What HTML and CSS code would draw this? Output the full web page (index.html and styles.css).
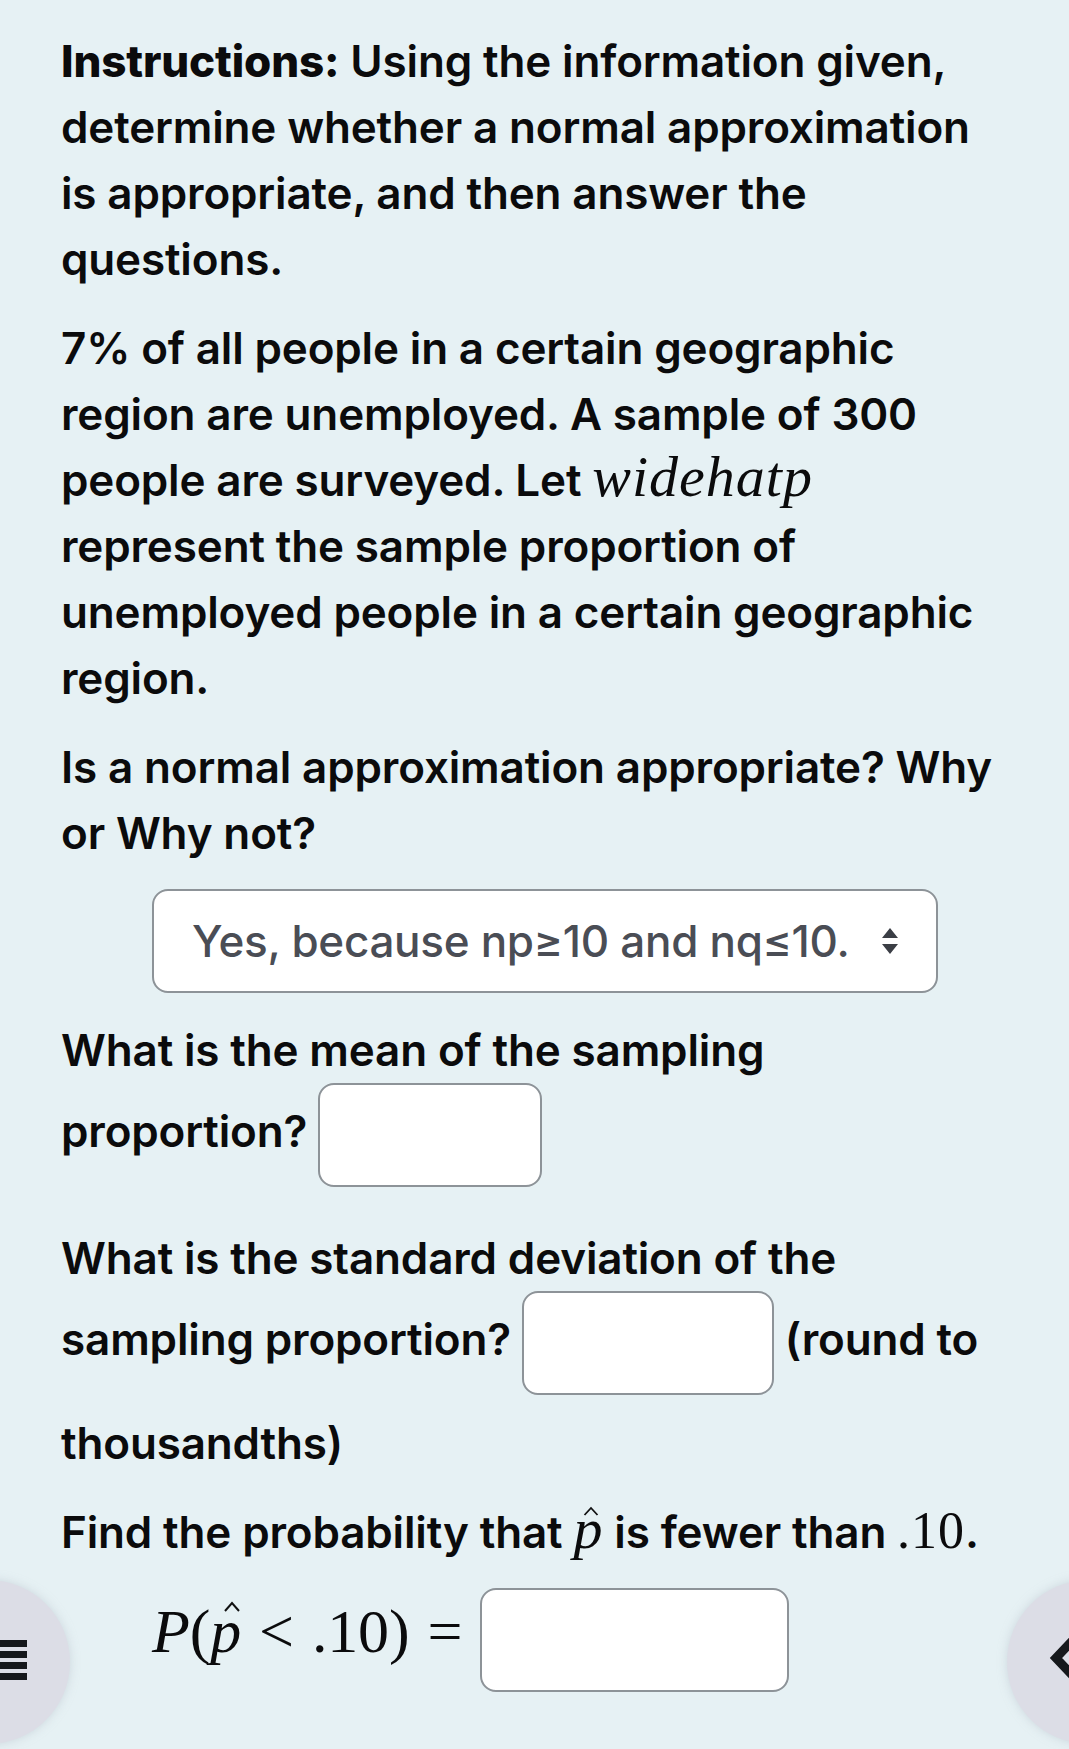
FILE: index.html
```html
<!DOCTYPE html>
<html>
<head>
<meta charset="utf-8">
<link rel="stylesheet" href="styles.css">
</head>
<body>
<main class="question">
  <p class="para"><strong class="label">Instructions:</strong> Using the information given,<br>determine whether a normal approximation<br>is appropriate, and then answer the<br>questions.</p>
  <p class="para">7% of all people in a certain geographic<br>region are unemployed. A sample of 300<br>people are surveyed. Let <span class="math-inline">widehatp</span><br>represent the sample proportion of<br>unemployed people in a certain geographic<br>region.</p>
  <p class="para">Is a normal approximation appropriate? Why<br>or Why not?</p>
  <div class="select">
    <span class="select-text">Yes, because np≥10 and nq≤10.</span>
    <svg class="select-arrows" width="20" height="28" viewBox="0 0 20 28"><path d="M10 1 L18 11 L2 11 Z M10 27 L18 17 L2 17 Z" fill="#3b3e45"/></svg>
  </div>
  <p class="para">What is the mean of the sampling<br>proportion? <span class="answer w-mean"></span></p>
  <p class="para">What is the standard deviation of the<br>sampling proportion? <span class="answer w-sd"></span> (round to<br>thousandths)</p>
  <p class="para">Find the probability that <span class="math-inline hatted">p<svg class="hat" width="16" height="10" viewBox="0 0 16 10"><path d="M1.5 9 L8 2 L14.5 9" fill="none" stroke="#111" stroke-width="1.8"/></svg></span> is fewer than <span class="math-num">.10</span>.</p>
  <p class="para display"><span class="math-display"><i>P</i>(<i class="hatted">p<svg class="hat big" width="18" height="11" viewBox="0 0 18 11"><path d="M2 10 L9 2 L16 10" fill="none" stroke="#111" stroke-width="2"/></svg></i><span class="rel">&lt;</span>.10)<span class="rel">=</span></span><span class="answer w-prob"></span></p>
</main>
<button class="fab fab-left" aria-label="menu">
  <span class="bars"><span></span><span></span><span></span><span></span></span>
</button>
<button class="fab fab-right" aria-label="back">
  <svg class="chev" width="30" height="50" viewBox="0 0 30 50"><path d="M26 6 L8 25 L26 44" fill="none" stroke="#16181c" stroke-width="9" stroke-linejoin="miter"/></svg>
</button>
</body>
</html>
```
FILE: styles.css
```css
html, body {
  margin: 0;
  padding: 0;
  background: #e6f1f4;
}
body {
  font-family: Inter, "Noto Sans", sans-serif;
  color: #0b0b0c;
  width: 1069px;
  height: 1749px;
  overflow: hidden;
  position: relative;
}
.question {
  padding: 28px 0 0 61px;
  font-size: 44px;
  font-weight: 600;
  line-height: 66px;
  letter-spacing: -0.15px;
}
.para {
  margin: 0 0 23px 0;
  white-space: nowrap;
}
.label {
  font-weight: 800;
}
.math-inline {
  font-family: "Liberation Serif", "DejaVu Serif", serif;
  font-style: italic;
  font-weight: 400;
  font-size: 58px;
  line-height: 1;
  letter-spacing: 1px;
}
.math-num {
  font-family: "Liberation Serif", "DejaVu Serif", serif;
  font-weight: 400;
  font-size: 52px;
  line-height: 1;
  letter-spacing: 1px;
}
.hatted {
  position: relative;
}
.hat {
  position: absolute;
  left: 10px;
  top: 10px;
}
.hat.big {
  left: 13px;
  top: 4px;
}
.select {
  margin: 0 0 24px 91px;
  width: 786px;
  height: 104px;
  box-sizing: border-box;
  border: 2px solid #8d9398;
  border-radius: 16px;
  background: #ffffff;
  display: flex;
  align-items: center;
  padding: 0 0 0 38px;
  gap: 30px;
}
.select-text {
  font-size: 44px;
  font-weight: 500;
  color: #4a4d55;
  letter-spacing: -0.3px;
}
.select-arrows {
  display: block;
}
.answer {
  display: inline-block;
  height: 104px;
  box-sizing: border-box;
  border: 2px solid #8d9398;
  border-radius: 16px;
  background: #ffffff;
  vertical-align: -55px;
  margin-bottom: 15px;
}
.w-mean { width: 224px; }
.w-sd { width: 252px; }
.w-prob { width: 309px; margin-left: 0; }
.display {
  padding-left: 91px;
}
.math-display {
  font-family: "Liberation Serif", "DejaVu Serif", serif;
  font-weight: 400;
  font-size: 62px;
  line-height: 1;
}
.math-display i {
  font-style: italic;
}
.rel {
  padding: 0 18px;
}
.fab {
  position: absolute;
  width: 164px;
  height: 164px;
  border-radius: 50%;
  border: none;
  background: #dcdde6;
  box-shadow: 0 0 10px rgba(180, 190, 200, 0.5);
  padding: 0;
  top: 1580px;
}
.fab-left {
  left: -94px;
}
.fab-right {
  left: 1007px;
}
.bars {
  position: absolute;
  left: 94px;
  top: 60px;
  width: 27px;
  display: flex;
  flex-direction: column;
  gap: 4px;
}
.bars span {
  display: block;
  height: 7px;
  background: #15171b;
}
.chev {
  position: absolute;
  left: 41px;
  top: 53px;
}
```
